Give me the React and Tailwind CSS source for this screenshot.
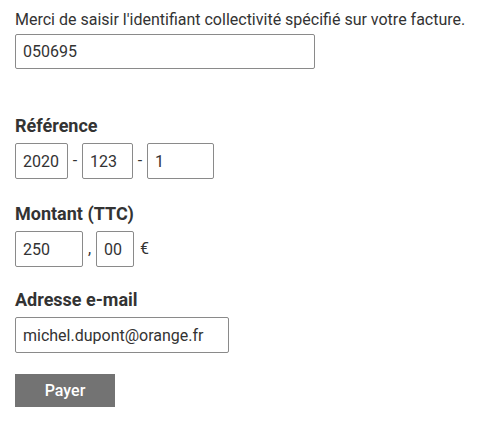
import React from 'react';

const Box = ({ value, className = '' }) => (
    <input
        readOnly
        value={value}
        className={`h-9 border border-[#8a8a8a] rounded-[2px] px-[7px] text-[16px] text-[#333] bg-white outline-none ${className}`}
    />
);

const Label = ({ children }) => (
    <h3 className="text-[18px] font-bold text-[#333] leading-[22px]">{children}</h3>
);

export default function App() {
    return (
        <div className="min-h-screen bg-white px-[15px] pt-[10px] text-[#333] font-['Roboto','Liberation_Sans',sans-serif]">
            <p className="text-[16px] leading-5">Merci de saisir l'identifiant collectivité spécifié sur votre facture.</p>
            <Box value="050695" className="mt-[4px] w-[300px] h-[35px]" />

            <div className="mt-[46px]">
                <Label>Référence</Label>
                <div className="flex items-center mt-[6px]">
                    <Box value="2020" className="w-[53px]" />
                    <span className="w-[14px] text-center text-[16px]">-</span>
                    <Box value="123" className="w-[51px]" />
                    <span className="w-[14px] text-center text-[16px]">-</span>
                    <Box value="1" className="w-[67px]" />
                </div>
            </div>

            <div className="mt-[24px]">
                <Label>Montant (TTC)</Label>
                <div className="flex items-center mt-[6px]">
                    <Box value="250" className="w-[68px]" />
                    <span className="w-[13px] text-center text-[16px]">,</span>
                    <Box value="00" className="w-[38px]" />
                    <span className="ml-[6px] text-[16px]">€</span>
                </div>
            </div>

            <div className="mt-[22px]">
                <Label>Adresse e-mail</Label>
                <Box value="michel.dupont@orange.fr" className="mt-[6px] w-[214px]" />
            </div>

            <button className="mt-[21px] w-[100px] h-[33px] bg-[#737373] text-white text-[16px] font-medium">
                Payer
            </button>
        </div>
    );
}
